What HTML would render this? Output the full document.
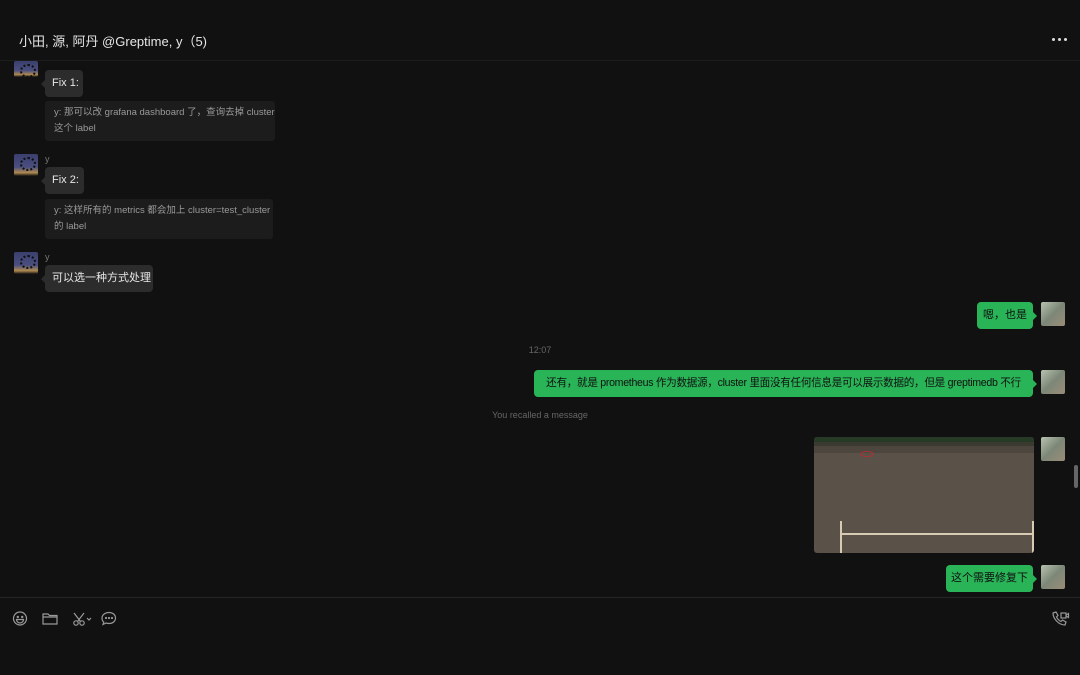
<!DOCTYPE html>
<html><head><meta charset="utf-8"><style>
*{margin:0;padding:0;box-sizing:border-box}
body{width:1080px;height:675px;background:#111;overflow:hidden;position:relative;font-family:"Liberation Sans","Noto Sans CJK SC",sans-serif;color:#ddd}
.a{position:absolute}
.hdr{left:19px;top:31px;font-size:13px;color:#e6e6e6}
.line{left:0;width:1080px;height:1px;background:#1d1d1d}
.av{position:absolute;width:24px;height:22px;border-radius:2px;overflow:hidden;background:linear-gradient(#3a3f6e 0%,#4b4f80 60%,#b08a50 85%,#111 100%)}
.av:after{content:"";position:absolute;left:6px;top:3px;width:12px;height:10px;border:2px dotted #111;border-radius:50%}
.avr{position:absolute;width:24px;height:24px;border-radius:2px;background:linear-gradient(135deg,#b8c2b0,#7d8777 50%,#9a8d78)}
.nm{position:absolute;left:45px;font-size:9px;color:#777}
.b{position:absolute;background:#2c2c2c;border-radius:4px;font-size:11px;color:#e8e8e8;height:27px;line-height:27px;padding:0 7px;white-space:nowrap}
.b:before{content:"";position:absolute;left:-4px;top:10px;border:4px solid transparent;border-left:0;border-right-color:#2c2c2c}
.q{position:absolute;left:45px;height:40px;background:#1c1c1c;border-radius:3px;font-size:9.5px;color:#9a9a9a;line-height:16px;padding:4px 9px;white-space:nowrap}
.g{position:absolute;background:#29b457;border-radius:4px;font-size:11px;color:#111;height:27px;line-height:27px;padding:0;white-space:nowrap;text-align:center}
.g:after{content:"";position:absolute;right:-4px;top:10px;border:4px solid transparent;border-right:0;border-left-color:#29b457}
.sys{position:absolute;width:1080px;text-align:center;font-size:9px;color:#666}
</style></head><body>
<div class="a hdr">小田, 源, 阿丹 @Greptime, y（5)</div>
<div class="a" style="left:1052px;top:38px;width:16px;height:4px">
<span class="a" style="left:0;top:0;width:3px;height:3px;border-radius:50%;background:#ddd"></span>
<span class="a" style="left:6px;top:0;width:3px;height:3px;border-radius:50%;background:#ddd"></span>
<span class="a" style="left:12px;top:0;width:3px;height:3px;border-radius:50%;background:#ddd"></span></div>
<div class="a line" style="top:60px"></div>

<div class="av" style="left:14px;top:61px;height:16px"></div>
<div class="b" style="left:45px;top:70px;width:38px">Fix 1:</div>
<div class="q" style="top:101px;width:230px">y: 那可以改 grafana dashboard 了，查询去掉 cluster<br>这个 label</div>

<div class="av" style="left:14px;top:154px"></div>
<div class="nm" style="top:154px">y</div>
<div class="b" style="left:45px;top:167px;width:39px">Fix 2:</div>
<div class="q" style="top:199px;width:228px">y: 这样所有的 metrics 都会加上 cluster=test_cluster<br>的 label</div>

<div class="av" style="left:14px;top:252px"></div>
<div class="nm" style="top:252px">y</div>
<div class="b" style="left:45px;top:265px;width:108px">可以选一种方式处理</div>

<div class="g" style="left:977px;top:302px;width:56px">嗯，也是</div>
<div class="avr" style="left:1041px;top:302px"></div>
<div class="sys" style="top:345px">12:07</div>
<div class="g" style="left:534px;top:370px;width:499px;font-size:10.6px;letter-spacing:-0.3px">还有，就是 prometheus 作为数据源，cluster 里面没有任何信息是可以展示数据的，但是 greptimedb 不行</div>
<div class="avr" style="left:1041px;top:370px"></div>
<div class="sys" style="top:410px">You recalled a message</div>

<div class="a" style="left:814px;top:437px;width:220px;height:116px;background:#5a5248;border-radius:3px;overflow:hidden">
<div class="a" style="left:0;top:0;width:220px;height:5px;background:#263a26"></div>
<div class="a" style="left:0;top:5px;width:220px;height:4px;background:#3a3a30"></div>
<div class="a" style="left:0;top:9px;width:220px;height:7px;background:#4d463e"></div>
<div class="a" style="left:46px;top:14px;width:14px;height:6px;border:1px solid #b03030;border-radius:50%"></div>
<div class="a" style="left:26px;top:84px;width:2px;height:32px;background:#d8cbb4"></div>
<div class="a" style="left:26px;top:96px;width:194px;height:2px;background:#d8cbb4"></div>
<div class="a" style="left:218px;top:84px;width:2px;height:32px;background:#d8cbb4"></div>
</div>
<div class="avr" style="left:1041px;top:437px"></div>

<div class="g" style="left:946px;top:565px;width:87px">这个需要修复下</div>
<div class="avr" style="left:1041px;top:565px"></div>

<div class="a" style="left:1074px;top:465px;width:4px;height:23px;border-radius:2px;background:#666"></div>
<div class="a line" style="top:597px;background:#262626"></div>

<svg class="a" style="left:12px;top:610px" width="110" height="18" fill="none" stroke="#999" stroke-width="1.2">
<circle cx="8" cy="8.5" r="6.5"/><circle cx="5.8" cy="7" r=".6" fill="#999"/><circle cx="10.2" cy="7" r=".6" fill="#999"/><path d="M4.5 9.5h7a3.5 3.5 0 0 1-7 0z"/>
<path d="M31 4h5l1.5 1.5H45V14H31z M31 7h14"/>
<circle cx="64" cy="13" r="2.2"/><circle cx="70" cy="13" r="2.2"/><path d="M62 3l6.5 8.5M72 3l-6.5 8.5M75 8l2 2 2-2"/>
<path d="M97 2.5c4 0 6.5 2.5 6.5 5.5s-2.5 5.5-6.5 5.5c-1 0-2-.2-3-.5l-3 1.5.8-2.5C90 11 90 9.5 90 8c0-3 3-5.5 7-5.5z"/><circle cx="94" cy="8" r=".5" fill="#999"/><circle cx="97" cy="8" r=".5" fill="#999"/><circle cx="100" cy="8" r=".5" fill="#999"/>
</svg>
<svg class="a" style="left:1050px;top:610px" width="20" height="18" fill="none" stroke="#999" stroke-width="1.2">
<path d="M3 3l3-1 2 3.5-1.5 1.5c1 2 2.5 3.5 4.5 4.5l1.5-1.5L16 12l-1 3c-6 0-12-6-12-12z"/><rect x="11" y="3" width="5" height="5"/><path d="M16 5l2.5-1.5v4L16 6"/>
</svg>
</body></html>
